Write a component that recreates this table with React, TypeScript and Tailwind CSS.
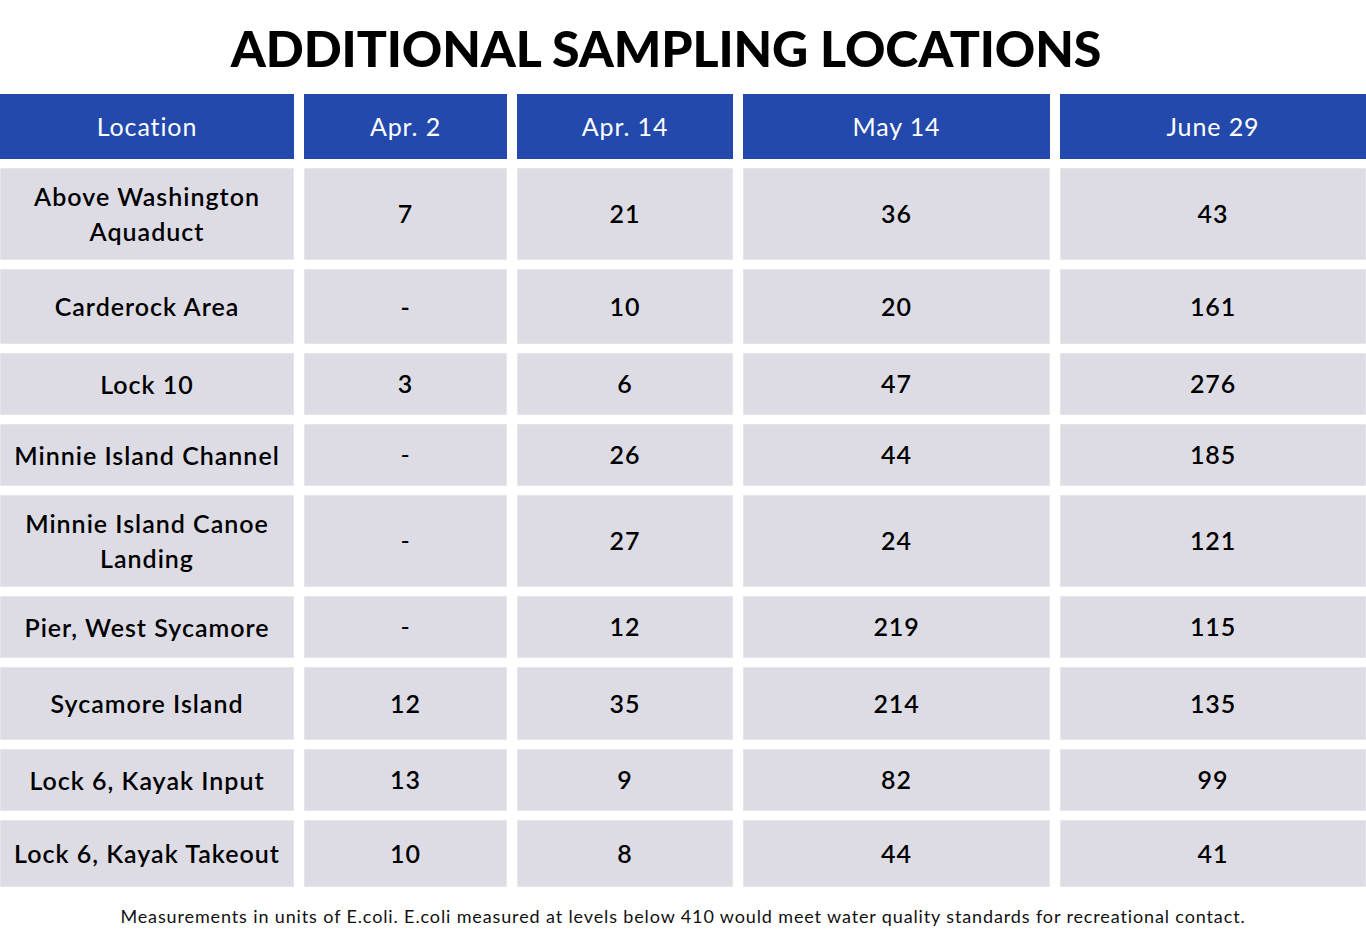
import React from "react";

const rows: { name: string[]; vals: string[]; h: string; lightDash?: boolean }[] = [
  { name: ["Above Washington", "Aquaduct"], vals: ["7", "21", "36", "43"], h: "h-[92px]" },
  { name: ["Carderock Area"], vals: ["-", "10", "20", "161"], h: "h-[75px]" },
  { name: ["Lock 10"], vals: ["3", "6", "47", "276"], h: "h-[62px]" },
  { name: ["Minnie Island Channel"], vals: ["-", "26", "44", "185"], h: "h-[62px]", lightDash: true },
  { name: ["Minnie Island Canoe", "Landing"], vals: ["-", "27", "24", "121"], h: "h-[92px]", lightDash: true },
  { name: ["Pier, West Sycamore"], vals: ["-", "12", "219", "115"], h: "h-[62px]", lightDash: true },
  { name: ["Sycamore Island"], vals: ["12", "35", "214", "135"], h: "h-[73px]" },
  { name: ["Lock 6, Kayak Input"], vals: ["13", "9", "82", "99"], h: "h-[62px]" },
  { name: ["Lock 6, Kayak Takeout"], vals: ["10", "8", "44", "41"], h: "h-[67px]" },
];

const headers = ["Location", "Apr. 2", "Apr. 14", "May 14", "June 29"];

const gridCls = "grid grid-cols-[294px_203px_216px_307px_1fr] gap-x-[10px]";

export default function App() {
  return (
    <div className="w-[1366px] h-[947px] bg-white flex flex-col" style={{ fontFamily: "Lato, 'Noto Sans', sans-serif" }}>
      <div className="h-[94px] flex items-center justify-center pr-[34px]">
        <h1 className="text-[50px] leading-none font-black tracking-[-0.1px] text-black pt-[2px]">
          ADDITIONAL SAMPLING LOCATIONS
        </h1>
      </div>
      <div className="flex flex-col gap-y-[9px]">
        <div className={`${gridCls} h-[65px]`}>
          {headers.map((h) => (
            <div key={h} className="bg-[#2349ad] text-white text-[25px] tracking-[0.9px] flex items-center justify-center">
              {h}
            </div>
          ))}
        </div>
        {rows.map((r) => (
          <div key={r.name.join(" ")} className={`${gridCls} ${r.h}`}>
            <div className="bg-[#dddce5] border border-[#e6e5ec] flex flex-col items-center justify-center text-[25px] tracking-[1px] leading-[35px] font-semibold text-black">
              {r.name.map((n) => (
                <span key={n}>{n}</span>
              ))}
            </div>
            {r.vals.map((v, i) => (
              <div
                key={i}
                className={`bg-[#dddce5] border border-[#e6e5ec] flex items-center justify-center text-[25px] tracking-[0.9px] text-black ${
                  v === "-" && r.lightDash ? "font-normal" : "font-semibold"
                }`}
              >
                {v}
              </div>
            ))}
          </div>
        ))}
      </div>
      <div className="flex-1 flex items-center justify-center text-[18px] tracking-[0.87px] text-[#111] pb-[2px]">
        Measurements in units of E.coli. E.coli measured at levels below 410 would meet water quality standards for recreational contact.
      </div>
    </div>
  );
}
